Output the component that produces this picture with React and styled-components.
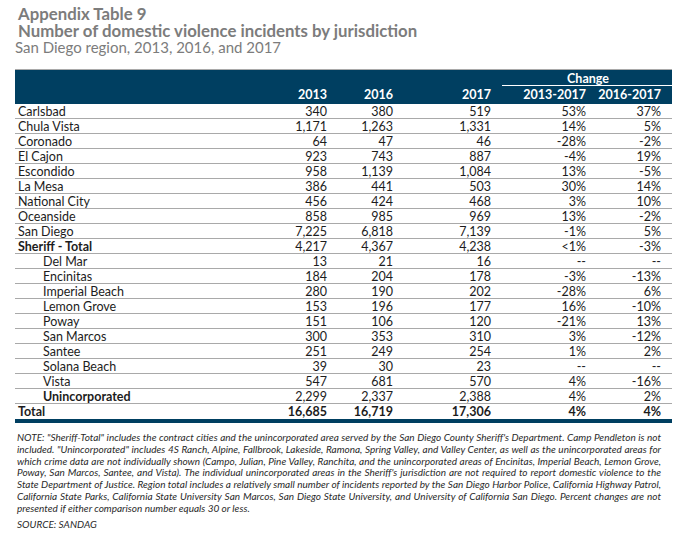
import React from "react";
import styled, { createGlobalStyle } from "styled-components";

const Global = createGlobalStyle`
  html, body { margin: 0; padding: 0; background: #ffffff; }
  body { font-family: Lato, "Liberation Sans", sans-serif; color: #1c1c1c; }
`;

const Page = styled.div`
  width: 688px;
  height: 543px;
  box-sizing: border-box;
  padding: 5px 16px 0 15px;
  overflow: hidden;
`;

const TitleBlock = styled.header`
  color: #7c7c7c;
  margin-bottom: 13px;
`;

const TitleLine = styled.div`
  font-size: ${(p) => (p.$bold ? 16.8 : 15)}px;
  line-height: 17px;
  font-weight: ${(p) => (p.$bold ? 700 : 400)};
  padding-left: ${(p) => (p.$bold ? 3 : 0)}px;
`;

const COLS = "232px 80px 66px 98px 95px 75px 11px";

const Table = styled.div`
  border-top: 1px solid #a9a9a9;
`;

const Head = styled.div`
  display: grid;
  grid-template-columns: ${COLS};
  grid-template-rows: 16px 18px;
  background: #003f61;
  color: #ffffff;
  font-weight: 700;
  font-size: 12.5px;
`;

const ChangeCell = styled.div`
  grid-column: 5 / 8;
  grid-row: 1;
  margin-left: 11px;
  text-align: center;
  line-height: 17px;
  border-bottom: 1px solid #ffffff;
  padding-left: 2px;
`;

const HeadCell = styled.div`
  grid-row: 2;
  grid-column: ${(p) => p.$col};
  text-align: right;
  line-height: 17px;
`;

const Row = styled.div`
  display: grid;
  grid-template-columns: ${COLS};
  height: 15px;
  box-sizing: border-box;
  border-bottom: ${(p) => (p.$last ? "none" : "1px solid #a9a9a9")};
  font-size: 12.5px;
  line-height: 15px;
  font-weight: ${(p) => (p.$bold ? 700 : 400)};
`;

const Label = styled.div`
  padding-left: ${(p) => (p.$indent ? 28 : 3)}px;
  font-weight: ${(p) => (p.$bold ? 700 : "inherit")};
  white-space: nowrap;
`;

const Num = styled.div`
  text-align: right;
  white-space: nowrap;
`;

const Bar = styled.div`
  height: 4px;
  background: #003f61;
`;

const Note = styled.div`
  margin-top: 9px;
  padding: 0 11px 0 2px;
  font-style: italic;
  font-size: 10px;
  line-height: 11.8px;
  color: #2a2a2a;
`;

const NoteLine = styled.div`
  text-align: justify;
  text-align-last: ${(p) => (p.$end ? "left" : "justify")};
  white-space: nowrap;
`;

const Source = styled.div`
  margin-top: 4px;
`;

const rows = [
  ["Carlsbad", "340", "380", "519", "53%", "37%"],
  ["Chula Vista", "1,171", "1,263", "1,331", "14%", "5%"],
  ["Coronado", "64", "47", "46", "-28%", "-2%"],
  ["El Cajon", "923", "743", "887", "-4%", "19%"],
  ["Escondido", "958", "1,139", "1,084", "13%", "-5%"],
  ["La Mesa", "386", "441", "503", "30%", "14%"],
  ["National City", "456", "424", "468", "3%", "10%"],
  ["Oceanside", "858", "985", "969", "13%", "-2%"],
  ["San Diego", "7,225", "6,818", "7,139", "-1%", "5%"],
  ["Sheriff - Total", "4,217", "4,367", "4,238", "<1%", "-3%", { boldLabel: true }],
  ["Del Mar", "13", "21", "16", "--", "--", { indent: true }],
  ["Encinitas", "184", "204", "178", "-3%", "-13%", { indent: true }],
  ["Imperial Beach", "280", "190", "202", "-28%", "6%", { indent: true }],
  ["Lemon Grove", "153", "196", "177", "16%", "-10%", { indent: true }],
  ["Poway", "151", "106", "120", "-21%", "13%", { indent: true }],
  ["San Marcos", "300", "353", "310", "3%", "-12%", { indent: true }],
  ["Santee", "251", "249", "254", "1%", "2%", { indent: true }],
  ["Solana Beach", "39", "30", "23", "--", "--", { indent: true }],
  ["Vista", "547", "681", "570", "4%", "-16%", { indent: true }],
  ["Unincorporated", "2,299", "2,337", "2,388", "4%", "2%", { indent: true, boldLabel: true }],
  ["Total", "16,685", "16,719", "17,306", "4%", "4%", { bold: true, last: true }],
];

const noteLines = [
  "NOTE: \"Sheriff-Total\" includes the contract cities and the unincorporated area served by the San Diego County Sheriff's Department. Camp Pendleton is not",
  "included. \"Unincorporated\" includes 4S Ranch, Alpine, Fallbrook, Lakeside, Ramona, Spring Valley, and Valley Center, as well as the unincorporated areas for",
  "which crime data are not individually shown (Campo, Julian, Pine Valley, Ranchita, and the unincorporated areas of Encinitas, Imperial Beach, Lemon Grove,",
  "Poway, San Marcos, Santee, and Vista). The individual unincorporated areas in the Sheriff's jurisdiction are not required to report domestic violence to the",
  "State Department of Justice. Region total includes a relatively small number of incidents reported by the San Diego Harbor Police, California Highway Patrol,",
  "California State Parks, California State University San Marcos, San Diego State University, and University of California San Diego. Percent changes are not",
  "presented if either comparison number equals 30 or less.",
];

export default function App() {
  return (
    <>
      <Global />
      <Page>
        <TitleBlock>
          <TitleLine $bold>Appendix Table 9</TitleLine>
          <TitleLine $bold>Number of domestic violence incidents by jurisdiction</TitleLine>
          <TitleLine>San Diego region, 2013, 2016, and 2017</TitleLine>
        </TitleBlock>
        <Table>
          <Head>
            <ChangeCell>Change</ChangeCell>
            <HeadCell $col={2}>2013</HeadCell>
            <HeadCell $col={3}>2016</HeadCell>
            <HeadCell $col={4}>2017</HeadCell>
            <HeadCell $col={5}>2013-2017</HeadCell>
            <HeadCell $col={6}>2016-2017</HeadCell>
          </Head>
          {rows.map((r) => {
            const opt = r[6] || {};
            return (
              <Row key={r[0]} $bold={opt.bold} $last={opt.last}>
                <Label $indent={opt.indent} $bold={opt.boldLabel}>{r[0]}</Label>
                <Num>{r[1]}</Num>
                <Num>{r[2]}</Num>
                <Num>{r[3]}</Num>
                <Num>{r[4]}</Num>
                <Num>{r[5]}</Num>
              </Row>
            );
          })}
          <Bar />
        </Table>
        <Note>
          {noteLines.map((l, i) => (
            <NoteLine key={i} $end={i === noteLines.length - 1}>{l}</NoteLine>
          ))}
          <Source>SOURCE: SANDAG</Source>
        </Note>
      </Page>
    </>
  );
}
